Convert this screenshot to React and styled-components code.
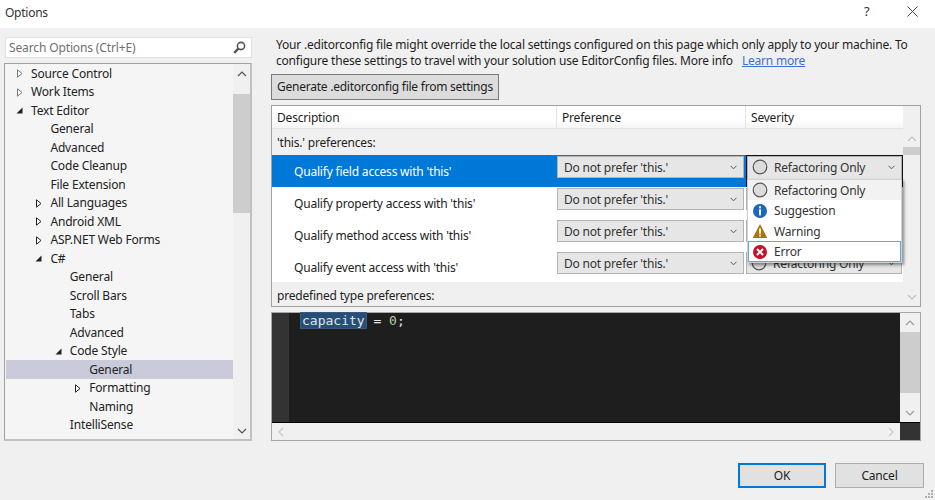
import React from 'react';
import styled, { createGlobalStyle } from 'styled-components';

const Global = createGlobalStyle`
  html, body { margin: 0; padding: 0; background: #f0f0f0; }
  body { font-family: "Noto Sans", "Open Sans", sans-serif; font-size: 12px; color: #1e1e1e; }
  * { box-sizing: border-box; }
`;

const Dialog = styled.div`
  width: 935px; height: 500px; display: flex; flex-direction: column;
  background: #f0f0f0; overflow: hidden; position: relative;
`;
const TitleBar = styled.div`
  height: 28px; flex: none; background: #fff; display: flex; align-items: center;
  padding: 0 17px 4px 5px; letter-spacing: -0.25px;
`;
const TitleText = styled.div`flex: 1; color: #333;`;
const HelpMark = styled.div`width: 10px; margin: 0 33px 2px 0; font-size: 13px; color: #333;`;
const CloseIcon = styled.svg`width: 11px; height: 11px; margin-bottom: 2px;`;

const Body = styled.div`
  display: flex; padding: 9px 14px 0 4px; gap: 19px; height: 413px; flex: none;
`;
const LeftColumn = styled.div`width: 248px; flex: none; display: flex; flex-direction: column; gap: 5px;`;
const SearchBox = styled.div`
  height: 21px; margin-left: 1px; width: 247px; background: #fff; border: 1px solid #e0e0e0;
  display: flex; align-items: center; justify-content: space-between; padding: 0 5px 1px 3px;
  color: #6f6f6f; letter-spacing: -0.13px;
`;
const TreePanel = styled.div`
  height: 378px; display: flex; background: #f5f5f5;
  border-style: solid; border-width: 1px 2px 2px 1px; border-color: #a0a0a0 #c0c0c0 #c0c0c0 #a0a0a0; overflow: hidden;
`;
const TreeList = styled.div`flex: 1; overflow: hidden; min-width: 0; padding-left: 1px;`;
const TreeRow = styled.div`
  height: 18.5px; display: flex; align-items: center; white-space: nowrap;
  padding-left: ${p => p.$level * 19.4 + 25}px; position: relative;
  background: ${p => (p.$selected ? '#c9cbdb' : 'transparent')};
  letter-spacing: -0.16px; color: #222;
`;
const Expander = styled.svg`
  position: absolute; left: ${p => p.$level * 19.4 + 9}px; top: 5px; width: 9px; height: 9px;
`;
const VScroll = styled.div`
  width: ${p => p.$width}px; flex: none; display: flex; flex-direction: column; align-items: center;
  background: #f0f0f0; padding-top: ${p => p.$top}px; justify-content: space-between;
`;
const VThumb = styled.div`
  align-self: stretch; height: ${p => p.$height}px; background: #cdcdcd; flex: none;
`;
const ScrollGap = styled.div`flex: 1;`;
const ChevronWrap = styled.svg`width: 10px; height: 6px; flex: none; margin: ${p => p.$margin};`;

const RightColumn = styled.div`flex: 1; min-width: 0; display: flex; flex-direction: column;`;
const Notice = styled.div`
  padding-left: 5px; line-height: 16px; letter-spacing: -0.2px; white-space: nowrap; height: 35px; margin-bottom: 4px;
`;
const LearnLink = styled.a`color: #3c6fd1; text-decoration: underline; margin-left: 9px;`;
const GenerateButton = styled.div`
  width: 228px; height: 28px; background: #dcdcdc; border: 1px solid #7a7a7a;
  display: flex; align-items: center; padding: 0 0 1px 5px; margin-bottom: 5px; letter-spacing: -0.24px; white-space: nowrap;
`;
const OptionsTable = styled.div`
  height: 202px; width: 650px; border: 1px solid #a0a0a0; display: flex; flex: none; background: #f0f0f0;
`;
const TableMain = styled.div`width: 631px; flex: none; display: flex; flex-direction: column;`;
const HeaderRow = styled.div`
  height: 23px; flex: none; display: flex; background: linear-gradient(#ffffff 60%, #f5f5f5);
  border-bottom: 1px solid #e4e4e4;
`;
const HeaderCell = styled.div`
  width: ${p => p.$width}px; flex: none; padding-left: 5px; line-height: 24px;
  border-right: 1px solid ${p => (p.$last ? 'transparent' : '#e4e4e4')}; letter-spacing: -0.2px;
`;
const GroupRow = styled.div`
  height: ${p => p.$height}px; flex: none; padding: ${p => p.$nudge || 0}px 0 0 5px; display: flex; align-items: center; letter-spacing: -0.2px;
`;
const PrefRow = styled.div`
  height: ${p => p.$height}px; flex: none; display: flex; position: relative;
  background: #fff;
`;
const RowLabel = styled.div`
  width: 285px; flex: none; padding-left: 22px; display: flex; align-items: center; letter-spacing: -0.2px;
  background: ${p => (p.$selected ? '#0078d7' : 'transparent')};
  color: ${p => (p.$selected ? '#fff' : '#222')}; padding-top: 1px;
`;
const PrefCell = styled.div`
  width: 189px; flex: none; padding: 1px 2px 0 0;
  background: ${p => (p.$selected ? '#0078d7' : 'transparent')};
`;
const SeverityCell = styled.div`
  width: 157px; flex: none; position: relative; padding: ${p => (p.$focused ? '0' : '1px 1px 0 0')};
  ${p => p.$focused && 'border: 1px solid #111; border-bottom: 0;'}
`;
const Combo = styled.div`
  height: ${p => p.$height || 22}px; background: #e6e6e6; border: 1px solid #b4b4b4;
  display: flex; align-items: center; justify-content: space-between;
  padding: 0 6px ${p => p.$lift || 0}px ${p => p.$left || 6}px; letter-spacing: -0.2px;
  white-space: nowrap; color: #333;
`;
const SeverityValue = styled.span`display: flex; align-items: center; gap: 6px;`;
const DropList = styled.div`
  position: absolute; left: 0; top: 23px; width: 155px; height: 84px; background: #fff; z-index: 5;
  border: 1px solid #d0d0d0; box-shadow: 2px 2px 3px rgba(0, 0, 0, 0.45);
`;
const DropItem = styled.div`
  height: ${p => p.$height}px; display: flex; align-items: center; gap: 6px; padding-left: 3px; letter-spacing: -0.2px;
  background: ${p => (p.$hover ? '#f2f2f2' : 'transparent')};
  border: 1px solid ${p => (p.$current ? '#64a8d8' : 'transparent')};
  color: #333;
`;

const EditorPanel = styled.div`
  margin-top: 5px; width: 650px; height: 129px; border: 1px solid #a8a8a8; display: flex; flex-direction: column; flex: none;
  background: #f0f0f0;
`;
const EditorTop = styled.div`height: 110px; flex: none; display: flex; border-bottom: 1px solid #000;`;
const Gutter = styled.div`width: 17px; flex: none; background: #333;`;
const CodeArea = styled.div`
  flex: 1; background: #1e1e1e; padding: 0 0 0 12px;
  font-family: "DejaVu Sans Mono", monospace; font-size: 13px; line-height: 15px; color: #e4e4e4; white-space: pre;
`;
const Selected = styled.span`background: #264f78; outline: 1px solid #3a5a7c; padding: 0 1px 0 1px;`;
const NumberToken = styled.span`color: #b5cea8;`;
const EditorBottom = styled.div`height: 17px; flex: none; display: flex; align-items: center; justify-content: space-between;`;
const HArrows = styled.div`flex: 1; display: flex; justify-content: space-between; align-items: center; padding: 0 6px;`;
const Corner = styled.div`width: 20px; height: 100%; background: #333; flex: none;`;

const Footer = styled.div`
  flex: 1; display: flex; justify-content: flex-end; gap: 9px; padding: 22px 11px 0 0; position: relative;
`;
const DialogButton = styled.div`
  width: ${p => p.$width}px; height: 25px; background: #e1e1e1; display: flex; align-items: center; justify-content: center;
  border: ${p => (p.$primary ? '2px solid #0078d7' : '1px solid #adadad')}; letter-spacing: -0.2px;
`;
const Grip = styled.svg`position: absolute; right: 2px; bottom: 2px; width: 8px; height: 8px;`;

const Chevron = ({ dir = 'down', color = '#808080', margin = '0' }) => {
  const d = { up: 'M1 5 L5 1 L9 5', down: 'M1 1 L5 5 L9 1' }[dir];
  return (
    <ChevronWrap $margin={margin} viewBox="0 0 10 6" fill="none" stroke={color} strokeWidth="1.2">
      <path d={d} />
    </ChevronWrap>
  );
};

const SideArrow = ({ dir }) => (
  <svg width="6" height="10" viewBox="0 0 6 10" fill="none" stroke="#c8c8c8" strokeWidth="1.2">
    <path d={dir === 'left' ? 'M5 1 L1 5 L5 9' : 'M1 1 L5 5 L1 9'} />
  </svg>
);

const SmallChevron = () => (
  <svg width="7" height="5" viewBox="0 0 7 5" fill="none" stroke="#555" strokeWidth="1">
    <path d="M0.5 0.8 L3.5 3.8 L6.5 0.8" />
  </svg>
);

const NoneIcon = () => (
  <svg width="16" height="16" viewBox="0 0 16 16">
    <circle cx="8" cy="8" r="6.8" fill="#dcdcdc" stroke="#555" strokeWidth="1.2" />
  </svg>
);
const InfoIcon = () => (
  <svg width="16" height="16" viewBox="0 0 16 16">
    <circle cx="8" cy="8" r="7" fill="#1a66b8" />
    <rect x="7" y="3.3" width="2" height="2" fill="#fff" />
    <rect x="7" y="6.3" width="2" height="6" fill="#fff" />
  </svg>
);
const WarnIcon = () => (
  <svg width="16" height="16" viewBox="0 0 16 16">
    <path d="M8 1 L15.3 15 L0.7 15 Z" fill="#a5780c" />
    <rect x="7.1" y="5.5" width="1.8" height="5.3" fill="#fff" />
    <rect x="7.1" y="11.7" width="1.8" height="1.8" fill="#fff" />
  </svg>
);
const ErrorIcon = () => (
  <svg width="16" height="16" viewBox="0 0 16 16">
    <circle cx="8" cy="8" r="7" fill="#c8102e" />
    <path d="M5 5 L11 11 M11 5 L5 11" stroke="#fff" strokeWidth="2" />
  </svg>
);

const TreeArrow = ({ level, kind }) => (
  <Expander $level={level} viewBox="0 0 9 9">
    {kind === 'open' ? (
      <path d="M7.5 1.5 L7.5 7.5 L1.5 7.5 Z" fill="#222" />
    ) : (
      <path d="M2.5 0.8 L7 4.5 L2.5 8.2 Z" fill="#fff" stroke={kind === 'dark' ? '#222' : '#777'} strokeWidth="1" />
    )}
  </Expander>
);

const treeItems = [
  ['Source Control', 0, 'closed'],
  ['Work Items', 0, 'closed'],
  ['Text Editor', 0, 'open'],
  ['General', 1],
  ['Advanced', 1],
  ['Code Cleanup', 1],
  ['File Extension', 1],
  ['All Languages', 1, 'dark'],
  ['Android XML', 1, 'dark'],
  ['ASP.NET Web Forms', 1, 'dark'],
  ['C#', 1, 'open'],
  ['General', 2],
  ['Scroll Bars', 2],
  ['Tabs', 2],
  ['Advanced', 2],
  ['Code Style', 2, 'open'],
  ['General', 3, null, true],
  ['Formatting', 3, 'dark'],
  ['Naming', 3],
  ['IntelliSense', 2],
  ['C/C++', 1, 'dark'],
];

const prefRows = [
  "Qualify field access with 'this'",
  "Qualify property access with 'this'",
  "Qualify method access with 'this'",
  "Qualify event access with 'this'",
];
const rowHeights = [32, 32, 32, 31];

export default function App() {
  return (
    <Dialog>
      <Global />
      <TitleBar>
        <TitleText>Options</TitleText>
        <HelpMark>?</HelpMark>
        <CloseIcon viewBox="0 0 11 11" stroke="#444" strokeWidth="1" fill="none">
          <path d="M0.5 0.5 L10.5 10.5 M10.5 0.5 L0.5 10.5" />
        </CloseIcon>
      </TitleBar>
      <Body>
        <LeftColumn>
          <SearchBox>
            <span>Search Options (Ctrl+E)</span>
            <svg width="13" height="13" viewBox="0 0 13 13" fill="none" stroke="#555">
              <circle cx="8" cy="5" r="3.6" strokeWidth="1.6" />
              <path d="M5.4 7.6 L1.2 11.8" strokeWidth="2.4" />
            </svg>
          </SearchBox>
          <TreePanel>
            <TreeList>
              {treeItems.map(([label, level, arrow, selected], i) => (
                <TreeRow key={i} $level={level} $selected={selected}>
                  {arrow && <TreeArrow level={level} kind={arrow} />}
                  {label}
                </TreeRow>
              ))}
            </TreeList>
            <VScroll $width={17} $top={7}>
              <Chevron dir="up" color="#555" margin="0 0 17px" />
              <VThumb $height={119} />
              <ScrollGap />
              <Chevron dir="down" color="#555" margin="0 0 5px" />
            </VScroll>
          </TreePanel>
        </LeftColumn>
        <RightColumn>
          <Notice>
            Your .editorconfig file might override the local settings configured on this page which only apply to your machine. To
            <br />
            configure these settings to travel with your solution use EditorConfig files. More info
            <LearnLink>Learn more</LearnLink>
          </Notice>
          <GenerateButton>Generate .editorconfig file from settings</GenerateButton>
          <OptionsTable>
            <TableMain>
              <HeaderRow>
                <HeaderCell $width={285}>Description</HeaderCell>
                <HeaderCell $width={189}>Preference</HeaderCell>
                <HeaderCell $width={157} $last>Severity</HeaderCell>
              </HeaderRow>
              <GroupRow $height={26}>'this.' preferences:</GroupRow>
              {prefRows.map((label, i) => (
                <PrefRow key={label} $height={rowHeights[i]}>
                  <RowLabel $selected={i === 0}>{label}</RowLabel>
                  <PrefCell $selected={i === 0}>
                    <Combo>
                      <span>Do not prefer 'this.'</span>
                      <SmallChevron />
                    </Combo>
                  </PrefCell>
                  <SeverityCell $focused={i === 0}>
                    <Combo $height={i === 0 ? 24 : 22} $left={4} $lift={i === 0 ? 2 : 0}>
                      <SeverityValue>
                        <NoneIcon />
                        Refactoring Only
                      </SeverityValue>
                      <SmallChevron />
                    </Combo>
                    {i === 0 && (
                      <DropList>
                        <DropItem $height={20} $hover>
                          <NoneIcon />
                          Refactoring Only
                        </DropItem>
                        <DropItem $height={21}>
                          <InfoIcon />
                          Suggestion
                        </DropItem>
                        <DropItem $height={20}>
                          <WarnIcon />
                          Warning
                        </DropItem>
                        <DropItem $height={21} $current>
                          <ErrorIcon />
                          Error
                        </DropItem>
                      </DropList>
                    )}
                  </SeverityCell>
                </PrefRow>
              ))}
              <GroupRow $height={24} $nudge={2}>predefined type preferences:</GroupRow>
            </TableMain>
            <VScroll $width={17} $top={30}>
              <Chevron dir="up" color="#c0c0c0" margin="0 0 5px" />
              <VThumb $height={8} />
              <ScrollGap />
              <Chevron dir="down" color="#c0c0c0" margin="0 0 6px" />
            </VScroll>
          </OptionsTable>
          <EditorPanel>
            <EditorTop>
              <Gutter />
              <CodeArea>
                <Selected>capacity</Selected> = <NumberToken>0</NumberToken>;
              </CodeArea>
              <VScroll $width={20} $top={7}>
                <Chevron dir="up" color="#9a9a9a" margin="0 0 6px" />
                <VThumb $height={61} />
                <ScrollGap />
                <Chevron dir="down" color="#9a9a9a" margin="0 0 6px" />
              </VScroll>
            </EditorTop>
            <EditorBottom>
              <HArrows>
                <SideArrow dir="left" />
                <SideArrow dir="right" />
              </HArrows>
              <Corner />
            </EditorBottom>
          </EditorPanel>
        </RightColumn>
      </Body>
      <Footer>
        <DialogButton $width={88} $primary>OK</DialogButton>
        <DialogButton $width={89}>Cancel</DialogButton>
        <Grip viewBox="0 0 8 8" fill="#b0b0b0">
          <rect x="6" y="0" width="2" height="2" />
          <rect x="3" y="3" width="2" height="2" />
          <rect x="6" y="3" width="2" height="2" />
          <rect x="0" y="6" width="2" height="2" />
          <rect x="3" y="6" width="2" height="2" />
          <rect x="6" y="6" width="2" height="2" />
        </Grip>
      </Footer>
    </Dialog>
  );
}
